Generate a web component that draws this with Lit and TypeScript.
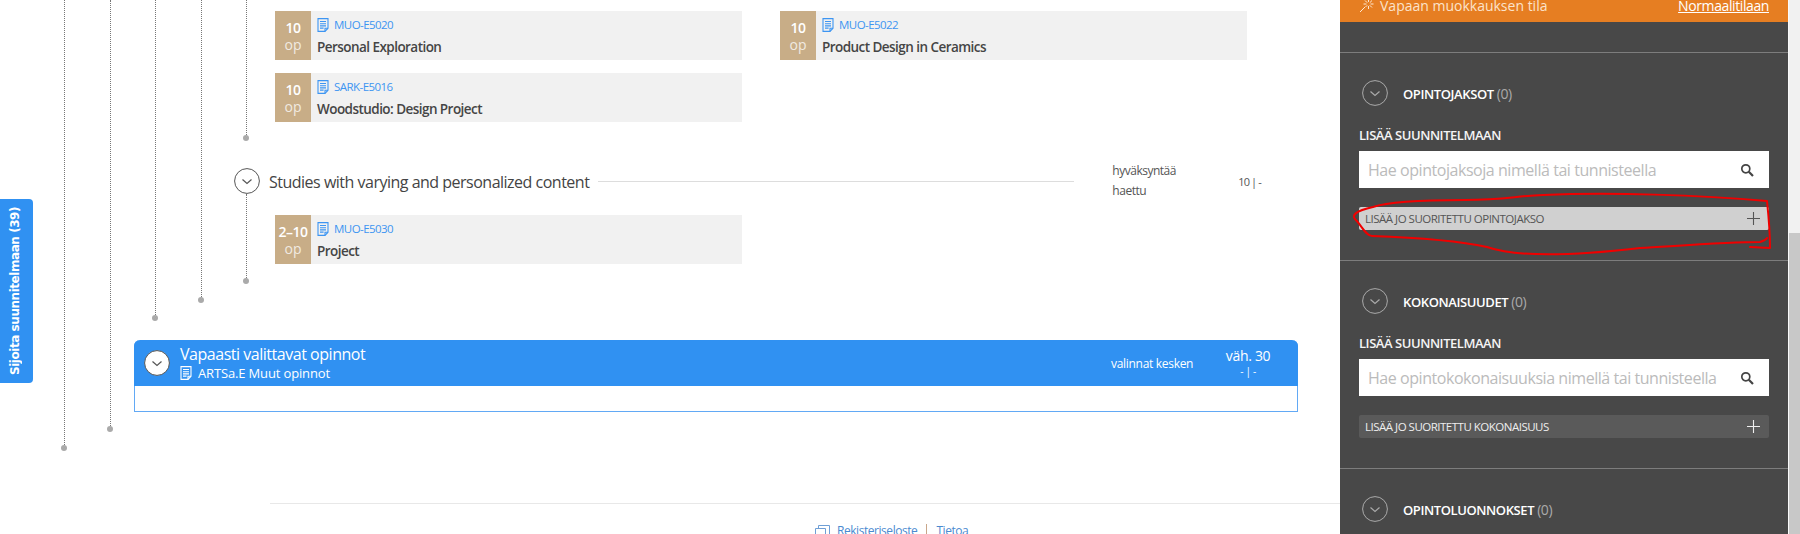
import { LitElement, html, css, svg } from "lit";
import { customElement } from "lit/decorators.js";

const docIcon = (cls: string) => html`<svg class=${cls} viewBox="0 0 12 14" width="12" height="14" fill="none" stroke="currentColor" stroke-width="1.1"><path d="M1 .6h10v9.6l-3 3.2H1z"/><path d="M11 10.2H8v3.2"/><path d="M3 3.5h6M3 5.7h6M3 7.9h6M3 10.1h3.6"/></svg>`;
const chevron = svg`<path d="M8.5 11.5 13 15.5l4.5-4" fill="none" stroke="currentColor" stroke-width="1.2"/>`;

const lines = [
  { x: 64, top: 0, height: 449 },
  { x: 110, top: 0, height: 430 },
  { x: 155, top: 0, height: 319 },
  { x: 201, top: 0, height: 301 },
  { x: 246, top: 0, height: 139 },
  { x: 246, top: 194, height: 88 },
];

@customElement("app-root")
export class AppRoot extends LitElement {
  static styles = css`
    :host { display: block; width: 1800px; height: 534px; overflow: hidden; background: #fff; font-family: "Open Sans", "Noto Sans", sans-serif; }
    * { box-sizing: border-box; }
    .page { display: flex; height: 534px; }
    .main { position: relative; flex: 0 0 1340px; height: 534px; overflow: hidden; padding-top: 11px; }
    .vline { position: absolute; width: 1px; border-left: 1px dotted #777; }
    .vline::after { content: ""; position: absolute; left: -4px; bottom: -2px; width: 6px; height: 6px; border-radius: 50%; background: #aaa; }
    .tab { position: absolute; left: 0; top: 199px; width: 33px; height: 184px; background: #3091f2; border-radius: 0 4px 4px 0; display: flex; align-items: center; justify-content: center; }
    .tab span { writing-mode: vertical-rl; transform: rotate(180deg); color: #fff; font: bold 12px "DejaVu Sans", sans-serif; letter-spacing: -.45px; white-space: nowrap; margin-right: 3px; }
    .cards { margin-left: 275px; display: grid; grid-template-columns: 467px 467px; column-gap: 38px; row-gap: 13px; }
    .card { display: flex; height: 49px; background: #f1f1f1; }
    .badge { flex: 0 0 36px; background: #c8ad87; color: #fff; display: flex; flex-direction: column; align-items: center; justify-content: center; font-size: 14px; line-height: 17px; padding-top: 1px; }
    .badge b { font-weight: 600; letter-spacing: -.5px; white-space: nowrap; }
    .badge span { opacity: .75; font-size: 14px; }
    .card-body { padding: 6px 0 0 6px; display: flex; flex-direction: column; }
    .code { display: flex; align-items: center; gap: 5px; color: #3d95f2; font-size: 11.5px; letter-spacing: -.55px; line-height: 15px; height: 15px; }
    .name { margin-top: 6px; font-size: 13.5px; line-height: 19px; font-weight: 600; color: #454545; white-space: nowrap; letter-spacing: -.55px; }
    .heading { margin: 46px 0 0 234px; height: 26px; display: flex; align-items: center; }
    .circle { flex: 0 0 26px; width: 26px; height: 26px; color: #555; }
    .heading h3 { margin: 2px 0 0 9px; font-size: 16px; font-weight: 400; color: #444; white-space: nowrap; letter-spacing: -.5px; }
    .rule { flex: 0 0 476px; height: 1px; background: #ddd; margin-left: 9px; }
    .status { margin-left: 38px; width: 126px; font-size: 12px; line-height: 20px; color: #555; letter-spacing: -.5px; }
    .value { font-size: 11px; color: #555; letter-spacing: -.9px; }
    .single { margin: 21px 0 0 275px; width: 467px; }
    .block { margin: 76px 0 0 134px; width: 1164px; height: 72px; border: 1px solid #62a9f5; border-top: 0; border-radius: 6px 6px 0 0; }
    .block-head { margin: 0 -1px; height: 46px; background: #3091f2; border-radius: 6px 6px 0 0; display: flex; align-items: center; color: #fff; padding: 0 0 0 10px; }
    .block-head .circle { color: #555; }
    .titles { margin-left: 10px; flex: 1; }
    .titles h2 { margin: 0; font-size: 16px; line-height: 20px; font-weight: 400; letter-spacing: -.47px; }
    .sub { display: flex; align-items: center; gap: 6px; font-size: 13px; line-height: 18px; letter-spacing: -.15px; }
    .kesken { font-size: 12px; width: 107px; letter-spacing: -.3px; }
    .credits { width: 60px; margin-right: 20px; text-align: center; font-size: 14px; line-height: 16px; letter-spacing: -.3px; }
    .credits small { display: block; font-size: 10px; line-height: 14px; }
    .foot { margin: 91px 0 0 270px; border-top: 1px solid #e8e8e8; padding: 17px 0 0 545px; display: flex; align-items: center; gap: 7px; font-size: 12px; letter-spacing: -.45px; line-height: 20px; color: #4a8ad0; }
    .foot i { width: 1px; height: 14px; background: #c9a68a; margin: 0 2px; }
    .side { flex: 0 0 448px; height: 534px; position: relative; overflow: hidden; background: #484848; color: #fff; }
    .mode { height: 22px; background: #e67e22; display: flex; align-items: flex-end; padding: 0 19px 7px; font-size: 14px; line-height: 18px; color: #fbe3cb; }
    .mode svg { margin: 0 6px 2px 0; }
    .mode span { flex: 1; }
    .mode a { color: #fff; text-decoration: underline; font-weight: 500; letter-spacing: -.4px; }
    .spacer { height: 30px; }
    .sec { border-top: 1px solid #7d7d7d; padding: 27px 19px 30.5px; }
    .sec-head { display: flex; align-items: center; height: 26px; margin-left: 3px; }
    .sec-head .circle { color: #aaa; }
    .sec-head h4 { margin: 0 0 0 15px; font-size: 13px; font-weight: 600; letter-spacing: -.4px; }
    .sec-head em { font-style: normal; color: #aaa; font-weight: 400; font-size: 14px; }
    .label { margin-top: 20px; height: 18px; font-size: 13px; line-height: 18px; font-weight: 600; color: #f4f4f4; letter-spacing: -.45px; }
    .search { margin-top: 7px; height: 37px; background: #fff; display: flex; align-items: center; justify-content: space-between; padding: 0 15px 0 9px; color: #444; }
    .search span { color: #bbb; font-size: 16px; white-space: nowrap; letter-spacing: -.45px; }
    .add { margin-top: 18.5px; height: 23px; background: #5a5a5a; border-radius: 2px; display: flex; align-items: center; justify-content: space-between; padding: 0 9px 0 6px; font-size: 11.5px; letter-spacing: -.5px; font-weight: 500; color: #eee; }
    .add.hl { background: #d0d0d0; color: #555; }
    .scribble { position: absolute; left: 0; top: 190px; pointer-events: none; }
    .bar { flex: 0 0 12px; background: linear-gradient(to right, #fafafa 1px, #f1f1f1 1px); position: relative; }
    .thumb { position: absolute; left: 1px; right: 0; top: 233px; bottom: 0; background: #c8c8c8; }
  `;

  private circle(fill = "none") {
    return html`<svg class="circle" viewBox="0 0 26 26"><circle cx="13" cy="13" r="12.4" fill=${fill} stroke="currentColor" stroke-width="1"/>${chevron}</svg>`;
  }

  private card(credits: string, code: string, name: string) {
    return html`<div class="card"><div class="badge"><b>${credits}</b><span>op</span></div><div class="card-body"><div class="code">${docIcon("")}${code}</div><div class="name">${name}</div></div></div>`;
  }

  private section(title: string, placeholder: string, add: string, hl = false) {
    return html`<div class="sec">
      <div class="sec-head">${this.circle()}<h4>${title} <em>(0)</em></h4></div>
      <div class="label">LISÄÄ SUUNNITELMAAN</div>
      <div class="search"><span>${placeholder}</span>
        <svg width="14" height="14" viewBox="0 0 14 14" fill="none" stroke="currentColor"><circle cx="5.8" cy="5.8" r="4" stroke-width="1.7"/><path d="M8.8 8.8 13 13" stroke-width="2.2"/></svg>
      </div>
      <div class="add ${hl ? "hl" : ""}"><span>${add}</span>
        <svg width="13" height="13" viewBox="0 0 13 13" stroke="currentColor" stroke-width="1.1"><path d="M6.5 0v13M0 6.5h13"/></svg>
      </div>
    </div>`;
  }

  render() {
    return html`<div class="page">
      <div class="main">
        ${lines.map((l) => html`<div class="vline" style="left:${l.x}px;top:${l.top}px;height:${l.height}px"></div>`)}
        <div class="tab"><span>Sijoita suunnitelmaan (39)</span></div>
        <div class="cards">
          ${this.card("10", "MUO-E5020", "Personal Exploration")}
          ${this.card("10", "MUO-E5022", "Product Design in Ceramics")}
          ${this.card("10", "SARK-E5016", "Woodstudio: Design Project")}
        </div>
        <div class="heading">
          ${this.circle("#fff")}
          <h3>Studies with varying and personalized content</h3>
          <div class="rule"></div>
          <div class="status">hyväksyntää<br />haettu</div>
          <div class="value">10 | -</div>
        </div>
        <div class="single">${this.card("2–10", "MUO-E5030", "Project")}</div>
        <div class="block">
          <div class="block-head">
            ${this.circle("#fff")}
            <div class="titles"><h2>Vapaasti valittavat opinnot</h2><div class="sub">${docIcon("")}ARTSa.E Muut opinnot</div></div>
            <div class="kesken">valinnat kesken</div>
            <div class="credits">väh. 30<small>- | -</small></div>
          </div>
        </div>
        <div class="foot">
          <svg width="15" height="13" viewBox="0 0 15 13" fill="none" stroke="#6f9fd6"><path d="M.5 12.5v-9h10v9zM3.5 3.5v-3h11v9h-4"/></svg>
          <span>Rekisteriseloste</span><i></i><span>Tietoa</span>
        </div>
      </div>
      <div class="side">
        <div class="mode">
          <svg width="15" height="15" viewBox="0 0 15 15" fill="none" stroke="#fde9d4" stroke-width="1"><path d="M1 14 6 9M9.5 1v3M9.5 8v3M4.5 6h3M11.5 6h3M6 2.5l2.2 2.2M13 2.5l-2.2 2.2M13 9.5l-2.2-2.2M6.5 9l1.7-1.7"/></svg>
          <span>Vapaan muokkauksen tila</span><a>Normaalitilaan</a>
        </div>
        <div class="spacer"></div>
        ${this.section("OPINTOJAKSOT", "Hae opintojaksoja nimellä tai tunnisteella", "LISÄÄ JO SUORITETTU OPINTOJAKSO", true)}
        ${this.section("KOKONAISUUDET", "Hae opintokokonaisuuksia nimellä tai tunnisteella", "LISÄÄ JO SUORITETTU KOKONAISUUS")}
        <div class="sec"><div class="sec-head">${this.circle()}<h4>OPINTOLUONNOKSET <em>(0)</em></h4></div></div>
        <svg class="scribble" width="448" height="70" viewBox="0 0 448 70" fill="none" stroke="#f00000" stroke-width="2" stroke-linejoin="round" stroke-linecap="round">
          <path d="M427 11C360 5 270 2 203 5 175 6 165 10 125 10 85 10 50 11 33 17 14 21 12 26 15 29 22 36 26 46 32 46 60 47 110 49 147 57 170 65 215 68 300 58 350 55 390 52 420 52 426 50 427 48 427 48M427 11C429 30 430 50 430 58L410 57"/>
        </svg>
      </div>
      <div class="bar"><div class="thumb"></div></div>
    </div>`;
  }
}
